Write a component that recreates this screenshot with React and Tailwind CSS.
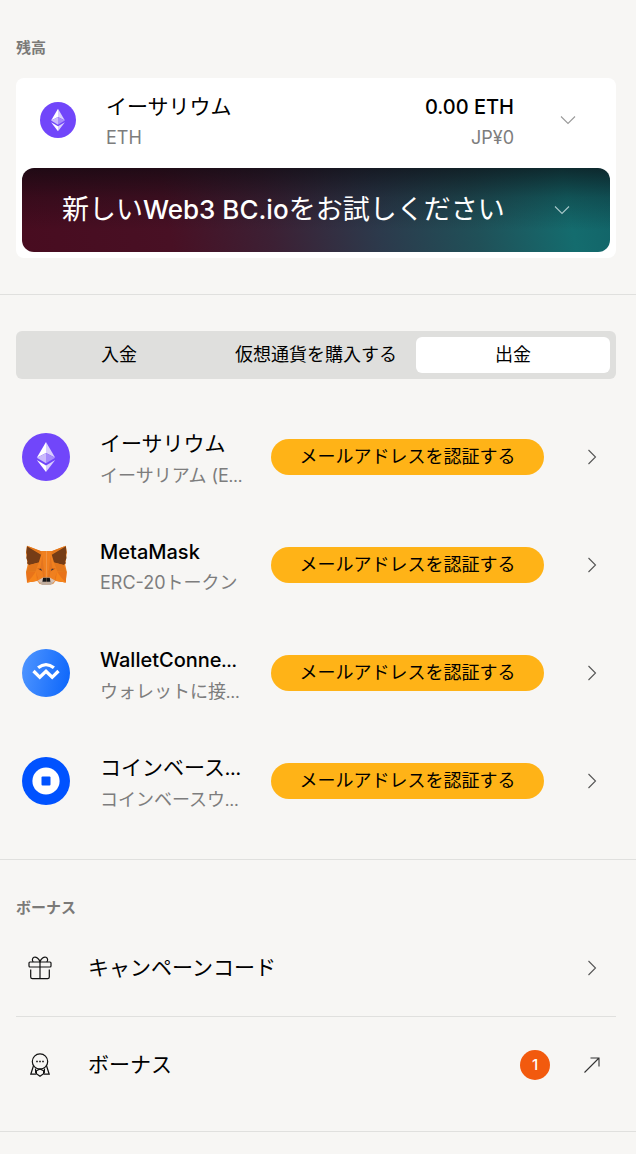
import React from "react";

function EthIcon({ className }) {
  return (
    <svg viewBox="0 0 48 48" className={className} aria-hidden="true">
      <circle cx="24" cy="24" r="24" fill="#7146fa" />
      <path d="M24 9v11.1l-9.2 4.7z" fill="#fff" />
      <path d="M24 9v11.1l9.2 4.7z" fill="#d9cdfe" />
      <path d="M24 20.1v10.2l-9.2-5.5z" fill="#cbbafd" />
      <path d="M24 20.1v10.2l9.2-5.5z" fill="#a78bfc" />
      <path d="M24 32.4V39l-9.2-12.1z" fill="#fff" />
      <path d="M24 32.4V39l9.2-12.1z" fill="#d9cdfe" />
    </svg>
  );
}

function FoxHalf() {
  return (
    <>
      <path fill="#f0801f" d="M139.500 90H121L80 74l-3 22 5 36-5 22 4 32 30-5 8 10 20.500 3z" />
      <path fill="#e2761b" d="M80 74l42 16 4 12z" />
      <path fill="#763d16" d="M80 76l43 26-7 23-29 8-7-5 2-6-4-10 2-10-2-8z" />
      <path fill="#e2761b" d="M116 125l-29 8-9 21 28-1z" />
      <path fill="#e8731a" d="M78 154h29l6 16-2 12-31 4z" />
      <path fill="#f6851b" d="M107 153l4 28-31 5 16-17z" />
      <path fill="#cd6116" d="M111 144l17-3 5 12-9-2z" />
      <path fill="#233447" d="M117 146l8-2 4 8z" />
      <path fill="#e4751f" d="M127 104l4 40 4 28h-5l-3-18-6-14z" />
      <path fill="#d7c1b3" d="M112 181l17-10h10.500v22H127z" />
      <path fill="#c0ad9e" d="M117 187l11-3h11.500v10H127z" />
      <path fill="#161616" d="M129 172h10.500v12H127z" />
    </>
  );
}

function MetaMaskIcon() {
  return (
    <svg viewBox="77 73 125 123" className="size-[41px]" aria-hidden="true">
      <FoxHalf />
      <g transform="matrix(-1 0 0 1 278.500 0)">
        <FoxHalf />
      </g>
    </svg>
  );
}

function WalletConnectIcon() {
  return (
    <svg viewBox="0 0 48 48" className="size-12" aria-hidden="true">
      <defs>
        <linearGradient id="wc" x1="0" x2="1" y1="0.4" y2="0.6">
          <stop offset="0" stopColor="#4c93ff" />
          <stop offset="1" stopColor="#0f68fb" />
        </linearGradient>
      </defs>
      <circle cx="24" cy="24" r="24" fill="url(#wc)" />
      <g fill="none" stroke="#fff" strokeWidth="3.3">
        <path d="M16.100 18.800q7.900-6.400 15.800 0" />
        <path d="M11.500 22l6.300 6.300L24 22.200l6.200 6.100 6.300-6.300" />
      </g>
    </svg>
  );
}

function CoinbaseIcon() {
  return (
    <svg viewBox="0 0 48 48" className="size-12" aria-hidden="true">
      <circle cx="24" cy="24" r="24" fill="#0052ff" />
      <circle cx="24" cy="24" r="13.6" fill="#fff" />
      <rect x="19.5" y="19.5" width="9" height="9" rx="1" fill="#0052ff" />
    </svg>
  );
}

function Chevron({ down, className = "" }) {
  return (
    <svg viewBox="0 0 16 16" className={`size-4 ${className}`} fill="none" stroke="currentColor" strokeWidth="1.1" aria-hidden="true">
      <path d={down ? "M1 4.5l7 7 7-7" : "M4.5 1l7 7-7 7"} />
    </svg>
  );
}

function GiftIcon() {
  return (
    <svg viewBox="0 0 24 24" className="size-6" fill="none" stroke="#111" strokeWidth="1.2" aria-hidden="true">
      <rect x="1" y="6" width="22" height="5" rx="1" />
      <path d="M2.700 13.500V21a1.700 1.700 0 0 0 1.700 1.700h15.200a1.700 1.700 0 0 0 1.700-1.700v-7.500M12 6v16.700" />
      <path d="M12 6C11 2.500 8 .4 6 1.300 4 2.300 4 4.500 5.200 6M12 6c1-3.500 4-5.600 6-4.700 2 1 2 3.200.8 4.700" />
    </svg>
  );
}

function BadgeIcon() {
  return (
    <svg viewBox="0 0 24 24" className="size-6" fill="none" stroke="#111" strokeWidth="1.2" aria-hidden="true">
      <circle cx="12" cy="8.500" r="7.700" />
      <path d="M5.400 13L2.800 21.200h4.700l1.200-1M18.600 13l2.600 8.200h-4.700l-1.200-1M7.500 15.500l.2 4.500M16.500 15.500l-.2 4.500" />
      <path d="M8.400 17.800v3L12 23.200l3.600-2.400v-3L12 16z" />
      <path d="M8.200 8.500h1.600M11.200 8.500h1.600M14.200 8.500h1.600" strokeWidth="1.600" />
    </svg>
  );
}

const wallets = [
  { icon: <EthIcon className="size-12" />, name: "イーサリウム", note: "イーサリアム (E", cutNote: true },
  { icon: <MetaMaskIcon />, name: "MetaMask", latin: true, note: "ERC-20トークン" },
  { icon: <WalletConnectIcon />, name: "WalletConne", latin: true, cutName: true, note: "ウォレットに接", cutNote: true },
  { icon: <CoinbaseIcon />, name: "コインベース", cutName: true, note: "コインベースウ", cutNote: true },
];

const tabs = ["入金", "仮想通貨を購入する", "出金"];

function Heading({ children }) {
  return <h2 className="text-[15px] leading-6 font-bold text-[#7b7a78]">{children}</h2>;
}

function Ellipsis() {
  return <span className="font-['Lato',sans-serif]">…</span>;
}

function Title({ latin, cut, children }) {
  return (
    <span className={`block leading-8 ${latin ? "text-xl/8 font-medium" : "text-[21px]"}`}>
      {children}
      {cut && <Ellipsis />}
    </span>
  );
}

function Note({ cut, children }) {
  return (
    <span className="block text-lg leading-[30px] text-[#7d7d7d]">
      {children}
      {cut && <Ellipsis />}
    </span>
  );
}

export default function App() {
  return (
    <main className="min-h-screen bg-[#f7f6f4] font-['Inter','Noto_Sans_CJK_JP',sans-serif] text-black">
      <section className="border-b border-[#e0e0de] pt-9 pr-5 pb-9 pl-4">
        <Heading>残高</Heading>
        <div className="mt-[18px] rounded-lg bg-white px-[6px] pb-[6px]">
          <button type="button" className="mb-[6px] flex h-[84px] w-full items-center pr-[34px] pl-[18px] text-left">
            <EthIcon className="size-9" />
            <span className="ml-[30px] grow pt-1">
              <Title>イーサリウム</Title>
              <Note>ETH</Note>
            </span>
            <span className="mr-[46px] pt-1 text-right">
              <Title latin>0.00 ETH</Title>
              <Note>JP¥0</Note>
            </span>
            <Chevron down className="text-[#9a9a9a]" />
          </button>
          <button
            type="button"
            className="flex h-[84px] w-full items-center justify-between rounded-xl bg-[linear-gradient(180deg,rgba(10,8,14,0.65),rgba(10,8,14,0.25)_35%,rgba(10,8,14,0)_75%),linear-gradient(80deg,#480c20_0%,#481024_25%,#3c2034_42%,#2c3a4c_60%,#205058_76%,#146c6e_92%,#126468_100%)] px-10 text-[27px] text-white"
          >
            <span>
              新しい<span className="text-[26px] font-medium">Web3 BC.io</span>をお試しください
            </span>
            <Chevron down className="text-[#a9c8ca]" />
          </button>
        </div>
      </section>

      <section className="border-b border-[#e0e0de] pt-9 pr-5 pb-6 pl-4">
        <div role="tablist" className="grid h-12 grid-cols-3 gap-[3px] rounded-md bg-[#dfdfdd] p-[6px]">
          {tabs.map((tab, i) => (
            <button
              key={tab}
              type="button"
              role="tab"
              aria-selected={i === 2}
              className={`rounded-md text-lg leading-6 whitespace-nowrap ${i === 2 ? "bg-white" : ""}`}
            >
              {tab}
            </button>
          ))}
        </div>
        <ul className="mt-6">
          {wallets.map((w) => (
            <li key={w.name} className="flex h-[108px] items-center pr-4 pl-[6px]">
              <span className="flex size-12 shrink-0 items-center justify-center">{w.icon}</span>
              <span className="ml-[30px] min-w-0 grow pt-1 whitespace-nowrap">
                <Title latin={w.latin} cut={w.cutName}>{w.name}</Title>
                <Note cut={w.cutNote}>{w.note}</Note>
              </span>
              <button type="button" className="h-9 w-[273px] shrink-0 rounded-full bg-[#ffb317] text-lg leading-6">
                メールアドレスを認証する
              </button>
              <Chevron className="ml-10 shrink-0 text-[#555]" />
            </li>
          ))}
        </ul>
      </section>

      <section className="border-b border-[#e0e0de] pt-9 pr-5 pb-[18px] pl-4">
        <Heading>ボーナス</Heading>
        <a href="#code" className="flex h-[97px] items-center border-b border-[#e0e0de] pr-4 pl-3">
          <GiftIcon />
          <span className="ml-9 grow text-[21px] leading-8">キャンペーンコード</span>
          <Chevron className="text-[#555]" />
        </a>
        <a href="#bonus" className="flex h-24 items-center pr-4 pl-3">
          <BadgeIcon />
          <span className="ml-9 grow text-[21px] leading-8">ボーナス</span>
          <span className="mr-[34px] flex size-[30px] items-center justify-center rounded-full bg-[#f25a0e] text-[15px] font-medium text-white">
            1
          </span>
          <svg viewBox="0 0 16 16" className="size-4" fill="none" stroke="#333" strokeWidth="1.1" aria-hidden="true">
            <path d="M.5 15.500L15 1M6.500 1H15v8.500" />
          </svg>
        </a>
      </section>
    </main>
  );
}
